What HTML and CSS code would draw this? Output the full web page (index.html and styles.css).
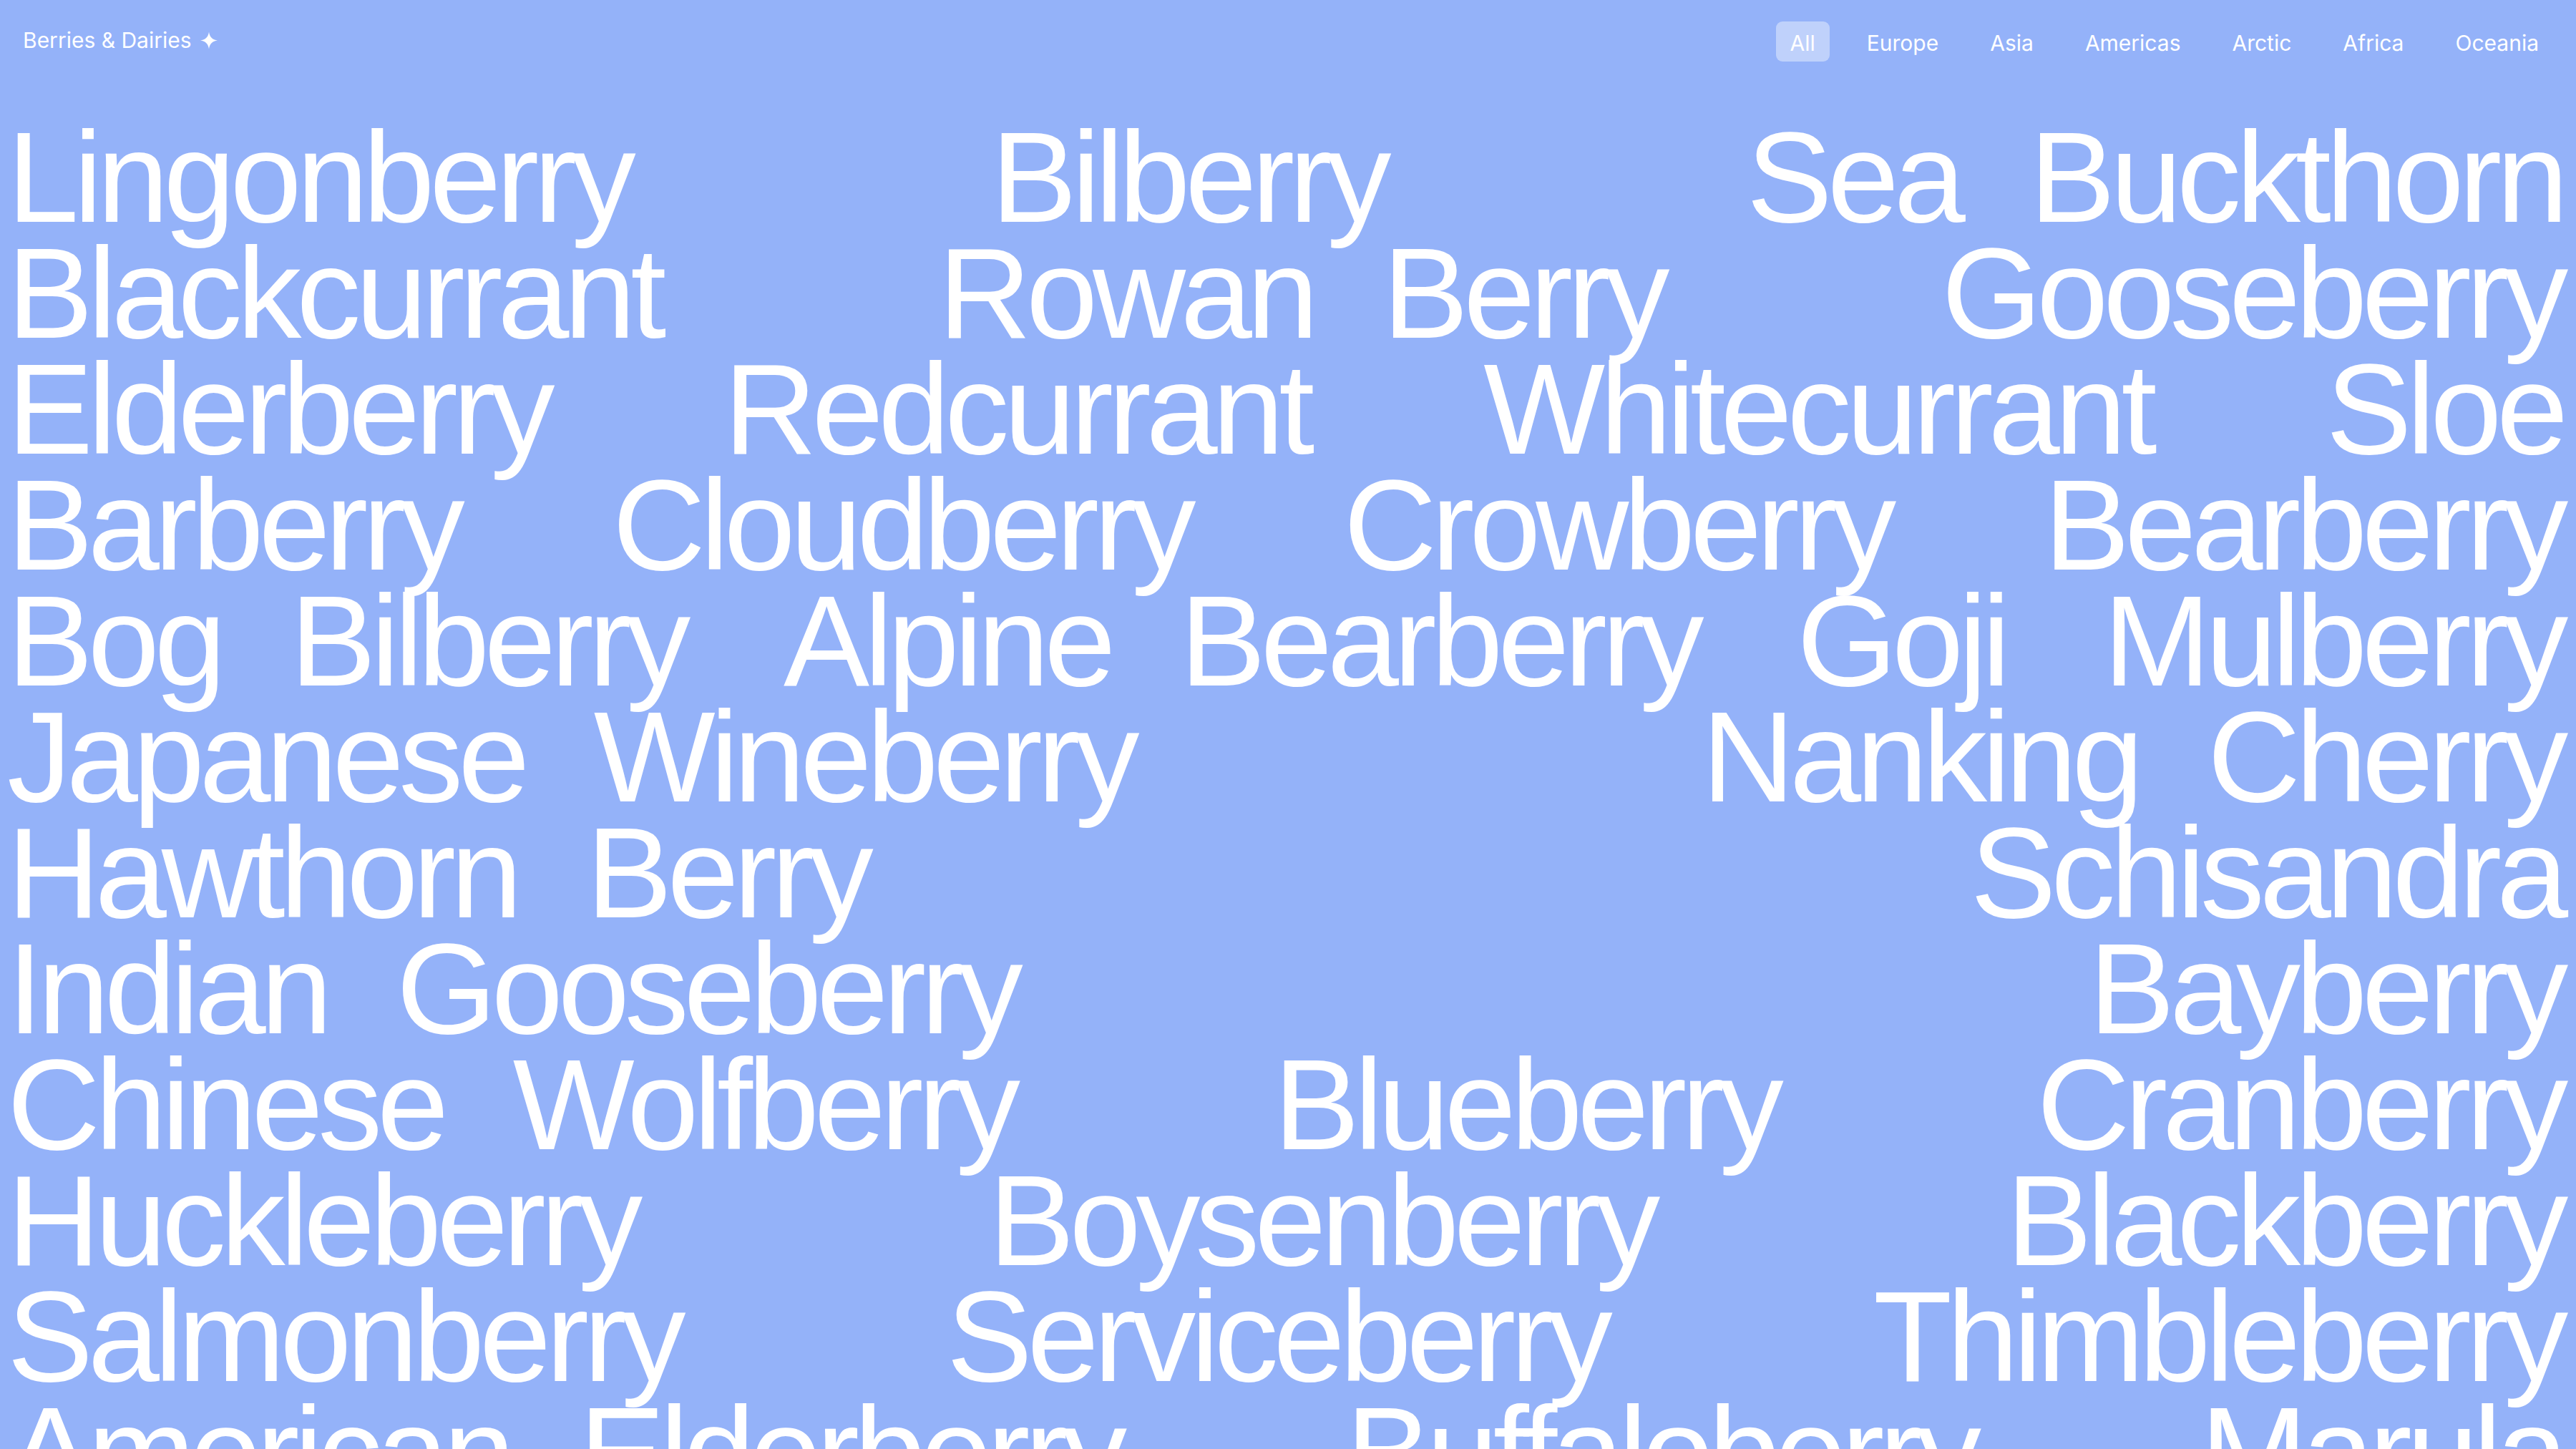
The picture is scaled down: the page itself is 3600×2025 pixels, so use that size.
FILE: index.html
```html
<!DOCTYPE html>
<html lang="en">
<head>
<meta charset="utf-8">
<title>Berries &amp; Dairies</title>
<link rel="stylesheet" href="styles.css">
</head>
<body>
<header class="top">
  <div class="logo">Berries &amp; Dairies<svg class="star" viewBox="0 0 24 24" aria-hidden="true"><path d="M12 0 C12.9 7.2 16.8 11.1 24 12 C16.8 12.9 12.9 16.8 12 24 C11.1 16.8 7.2 12.9 0 12 C7.2 11.1 11.1 7.2 12 0 Z"/></svg></div>
  <nav class="filters">
    <span class="filter active">All</span>
    <span class="filter">Europe</span>
    <span class="filter">Asia</span>
    <span class="filter">Americas</span>
    <span class="filter">Arctic</span>
    <span class="filter">Africa</span>
    <span class="filter">Oceania</span>
  </nav>
</header>
<main class="berries">
  <span class="berry">Lingonberry</span>
  <span class="berry">Bilberry</span>
  <span class="berry">Sea Buckthorn</span>
  <span class="berry">Blackcurrant</span>
  <span class="berry">Rowan Berry</span>
  <span class="berry">Gooseberry</span>
  <span class="berry">Elderberry</span>
  <span class="berry">Redcurrant</span>
  <span class="berry">Whitecurrant</span>
  <span class="berry">Sloe</span>
  <span class="berry">Barberry</span>
  <span class="berry">Cloudberry</span>
  <span class="berry">Crowberry</span>
  <span class="berry">Bearberry</span>
  <span class="berry">Bog Bilberry</span>
  <span class="berry">Alpine Bearberry</span>
  <span class="berry">Goji</span>
  <span class="berry">Mulberry</span>
  <span class="berry">Japanese Wineberry</span>
  <span class="berry">Nanking Cherry</span>
  <span class="berry">Hawthorn Berry</span>
  <span class="berry">Schisandra</span>
  <span class="berry">Indian Gooseberry</span>
  <span class="berry">Bayberry</span>
  <span class="berry">Chinese Wolfberry</span>
  <span class="berry">Blueberry</span>
  <span class="berry">Cranberry</span>
  <span class="berry">Huckleberry</span>
  <span class="berry">Boysenberry</span>
  <span class="berry">Blackberry</span>
  <span class="berry">Salmonberry</span>
  <span class="berry">Serviceberry</span>
  <span class="berry">Thimbleberry</span>
  <span class="berry">American Elderberry</span>
  <span class="berry">Buffaloberry</span>
  <span class="berry">Marula</span>
  <span class="berry">Kei Apple</span>
  <span class="berry">Cape Gooseberry</span>
  <span class="berry">Davidson's Plum</span>
  <span class="berry">Riberry</span>
  <span class="berry">Quandong</span>
</main>
</body>
</html>
```
FILE: styles.css
```css
html, body {
  margin: 0;
  padding: 0;
}

body {
  background: #94b2f9;
  color: #ffffff;
  height: 100vh;
  overflow: hidden;
  font-family: Inter, "Liberation Sans", sans-serif;
}

.top {
  display: flex;
  justify-content: space-between;
  align-items: flex-start;
  padding: 30px 32px 0;
}

.logo {
  display: flex;
  align-items: center;
  font-size: 30px;
  margin-top: 8px;
  line-height: 1.21;
}

.star {
  width: 24px;
  height: 25px;
  margin-left: 12px;
  fill: #ffffff;
}

.filters {
  display: flex;
  gap: 32px;
}

.filter {
  font-size: 30px;
  line-height: 1.21;
  padding: 12px 20px 8px;
  border-radius: 9px;
}

.filter.active {
  background: rgba(255, 255, 255, 0.4);
}

.berries {
  display: flex;
  flex-wrap: wrap;
  justify-content: space-between;
  column-gap: 90px;
  margin-top: 81px;
  padding: 0 18px 0 10px;
  font-family: "Liberation Sans", Arial, sans-serif;
  font-size: 180px;
  line-height: 0.9;
  letter-spacing: -0.04em;
  word-spacing: 0.3em;
}

.berry {
  white-space: nowrap;
}
```
